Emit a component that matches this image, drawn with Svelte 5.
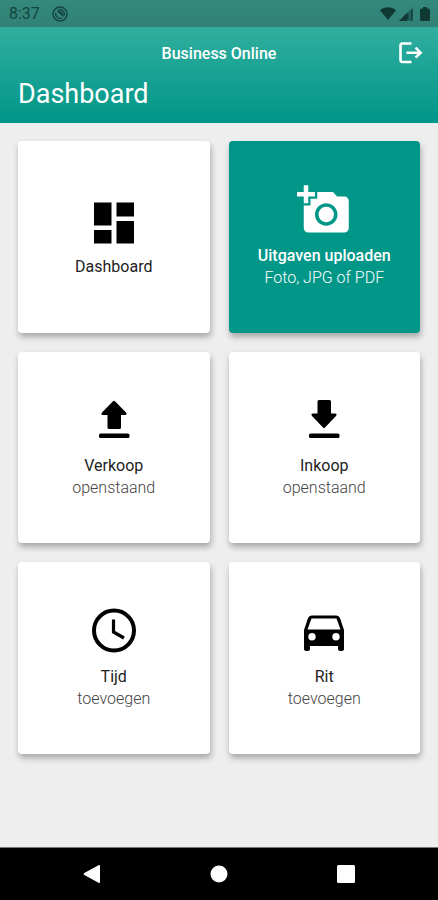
<script>
  const cards = [
    { id: 'dashboard', title: 'Dashboard' },
    { id: 'camera', title: 'Uitgaven uploaden', sub: 'Foto, JPG of PDF', primary: true },
    { id: 'up', title: 'Verkoop', sub: 'openstaand' },
    { id: 'down', title: 'Inkoop', sub: 'openstaand' },
    { id: 'clock', title: 'Tijd', sub: 'toevoegen' },
    { id: 'car', title: 'Rit', sub: 'toevoegen' }
  ];
</script>

<div class="screen">
  <div class="status">
    <span>8:37</span>
    <svg class="ring" viewBox="0 0 16 16" width="16" height="16" aria-hidden="true">
      <circle cx="8" cy="8" r="7" fill="none" stroke="currentColor" stroke-width="1.5" />
      <circle cx="8" cy="8" r="4.300" fill="none" stroke="currentColor" stroke-width="1.300" stroke-dasharray="10 3.500" transform="rotate(60 8 8)" />
      <path d="M4.800 5.200C8.500 3.600 12 6.500 11.400 11L8.600 8.400Z" fill="currentColor" />
    </svg>
    <div class="signals">
      <svg viewBox="0 0 16 13" width="16" height="13" aria-hidden="true">
        <path d="M0 3.2C4.6-.8 11.4-.8 16 3.2L8 13Z" fill="currentColor" />
      </svg>
      <svg viewBox="0 0 14 14" width="14" height="14" aria-hidden="true">
        <path d="M0 14 14 0V14Z" fill="currentColor" opacity=".45" />
        <path d="M0 14 8 6V14Z" fill="currentColor" />
        <path d="M8.800 6.500V12.500M12.800 3V13.500" stroke="currentColor" stroke-width="1.200" />
      </svg>
      <svg class="battery" viewBox="0 0 10 14" width="10" height="14" aria-hidden="true">
        <path d="M3 0h4v1.5h1.5Q10 1.5 10 3v9.5Q10 14 8.5 14h-7Q0 14 0 12.500V3Q0 1.500 1.500 1.500H3Z" fill="currentColor" />
      </svg>
    </div>
  </div>

  <header>
    <div class="bar">
      <span class="brand">Business Online</span>
      <button class="logout" aria-label="Uitloggen">
        <svg viewBox="0 0 24 22" width="24" height="22" aria-hidden="true">
          <path d="M12.500 1.500H3.500Q1.500 1.500 1.500 3.500V18Q1.500 20 3.500 20H12.500" fill="none" stroke="currentColor" stroke-width="2.600" />
          <path d="M7.500 10.700H21M16.500 5.700 21.700 10.700 16.500 15.700" fill="none" stroke="currentColor" stroke-width="2.500" />
        </svg>
      </button>
    </div>
    <h1>Dashboard</h1>
  </header>

  <main>
    {#each cards as card (card.id)}
      <button class="card" class:primary={card.primary}>
        <svg viewBox="0 0 54 54" width="54" height="54" fill="currentColor" aria-hidden="true">
          {#if card.id === 'dashboard'}
            <path d="M7 6.500h17.500v23H7zM7 34h17.500v13.500H7zM29.500 6.500H47v14H29.500zM29.500 25H47v22.500H29.500z" />
          {:else if card.id === 'camera'}
            <g transform="translate(0 -2) scale(2.25)">
              <path d="M3 4V1h2v3h3v2H5v3H3V6H0V4h3zm3 6V7h3V4h7l1.830 2H21c1.100 0 2 .9 2 2v12c0 1.100-.9 2-2 2H5c-1.100 0-2-.9-2-2V10h3zm7 9c2.760 0 5-2.240 5-5s-2.240-5-5-5-5 2.240-5 5 2.240 5 5 5zm-3.400-5c0 1.880 1.520 3.400 3.400 3.400s3.400-1.520 3.400-3.400-1.520-3.400-3.400-3.400-3.400 1.520-3.400 3.400z" />
            </g>
          {:else if card.id === 'up'}
            <path d="M26 6.200Q27 5.300 28 6.200L39 17.500Q40.500 20 38 20H34V32.500Q34 34 32.500 34H22Q20.500 34 20.500 32.500V20H16Q13.500 20 15 17.500Z" />
            <rect x="12" y="38.500" width="30.500" height="4.500" rx="1.500" />
          {:else if card.id === 'down'}
            <path d="M22 5H32.500Q34 5 34 6.500V18.500H38Q40.500 18.500 39 21L28 32.500Q27 33.500 26 32.500L15 21Q13.500 18.500 16 18.500H20.500V6.500Q20.500 5 22 5Z" />
            <rect x="12" y="38.500" width="30.500" height="4.500" rx="1.500" />
          {:else if card.id === 'clock'}
            <circle cx="27" cy="24.500" r="20" fill="none" stroke="currentColor" stroke-width="4" />
            <path d="M26.500 13.500V26L37 32" fill="none" stroke="currentColor" stroke-width="3.200" />
          {:else}
            <path fill-rule="evenodd" d="M14.500 9.500H39.500Q42 9.500 43 12L47 24V43Q47 45 45 45H43Q41 45 41 43V40H13V43Q13 45 11 45H9Q7 45 7 43V24L11 12Q12 9.500 14.500 9.500ZM14.500 12.500 10.500 23.500H43.500L39.500 12.500ZM15 27a3.700 3.700 0 1 0 0 7.400a3.700 3.700 0 1 0 0-7.400ZM39 27a3.700 3.700 0 1 0 0 7.400a3.700 3.700 0 1 0 0-7.400Z" />
          {/if}
        </svg>
        <span class="title">{card.title}</span>
        {#if card.sub}<span class="sub">{card.sub}</span>{/if}
      </button>
    {/each}
  </main>

  <nav aria-label="Systeem">
    <button aria-label="Terug">
      <svg viewBox="0 0 18 18" width="18" height="18"><path d="M1.300 8Q0 9 1.300 10L15.500 17.800Q17 18.200 17 17V1Q17-.2 15.500.2Z" fill="#fff" /></svg>
    </button>
    <button aria-label="Start">
      <svg viewBox="0 0 18 18" width="18" height="18"><circle cx="9" cy="9" r="8.500" fill="#fff" /></svg>
    </button>
    <button aria-label="Recent">
      <svg viewBox="0 0 18 18" width="18" height="18"><rect width="18" height="18" rx="1.500" fill="#fff" /></svg>
    </button>
  </nav>
</div>

<style>
  :global(body) {
    margin: 0;
  }
  .screen {
    display: flex;
    flex-direction: column;
    min-height: 100vh;
    background: #eee;
    font-family: Roboto, sans-serif;
  }
  button {
    margin: 0;
    padding: 0;
    border: 0;
    background: none;
    color: inherit;
    font: inherit;
  }
  svg {
    display: block;
  }
  .status {
    display: flex;
    align-items: center;
    height: 27px;
    padding: 0 8px 0 9px;
    background: linear-gradient(#34887c, #308275);
    color: #14453f;
    font-size: 16px;
  }
  .ring {
    margin-left: 12px;
  }
  .signals {
    display: flex;
    align-items: center;
    gap: 3px;
    margin-left: auto;
    color: #103833;
  }
  .battery {
    margin-left: 4px;
  }
  header {
    box-sizing: border-box;
    height: 96px;
    background: linear-gradient(#31ae9f, #009688);
    color: #fff;
  }
  .bar {
    display: grid;
    grid-template-columns: 1fr auto 1fr;
    align-items: center;
    height: 52px;
    padding: 0 15px;
  }
  .brand {
    grid-column: 2;
    font-size: 16px;
    font-weight: 500;
  }
  .logout {
    justify-self: end;
  }
  h1 {
    margin: 0;
    padding: 0 18px;
    font-size: 27px;
    font-weight: 400;
    line-height: 30px;
  }
  main {
    display: grid;
    flex: 1;
    grid-template-columns: 1fr 1fr;
    align-content: start;
    gap: 19px;
    padding: 18px;
  }
  .card {
    display: flex;
    flex-direction: column;
    align-items: center;
    justify-content: center;
    aspect-ratio: 1;
    border-radius: 4px;
    background: #fff;
    box-shadow: 1px 4px 6px rgba(0, 0, 0, 0.3);
    color: #000;
    font-size: 16px;
    line-height: 22px;
  }
  .title {
    margin-top: 6px;
    color: #222;
  }
  .sub {
    color: #444;
    font-weight: 300;
  }
  .primary {
    background: #009688;
    color: #fff;
  }
  .primary .title {
    color: #fff;
    font-weight: 500;
  }
  .primary .sub {
    color: #fff;
  }
  nav {
    display: flex;
    align-items: center;
    justify-content: space-between;
    box-sizing: border-box;
    height: 53px;
    padding: 0 19%;
    border-top: 1px solid #777;
    background: #000;
  }
</style>
